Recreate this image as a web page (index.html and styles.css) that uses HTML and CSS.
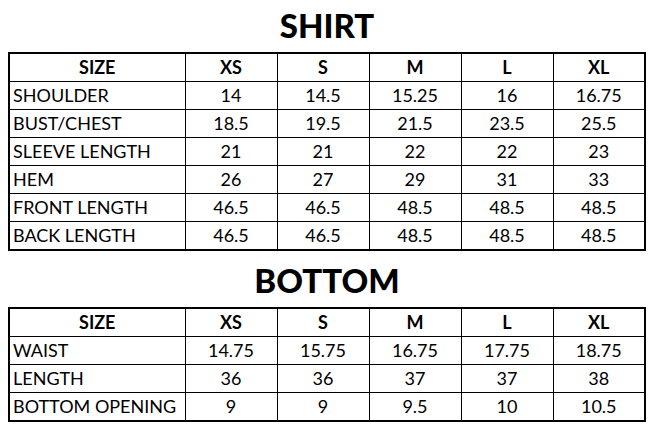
FILE: index.html
```html
<!DOCTYPE html>
<html>
<head>
<meta charset="utf-8">
<link rel="stylesheet" href="styles.css">
</head>
<body>
<div class="page">
  <h1 class="title title-first">SHIRT</h1>
  <table class="chart">
    <colgroup>
      <col class="c-label"><col class="c-size"><col class="c-size"><col class="c-size"><col class="c-size"><col class="c-size">
    </colgroup>
    <tr class="head"><th>SIZE</th><th>XS</th><th>S</th><th>M</th><th>L</th><th>XL</th></tr>
    <tr><td>SHOULDER</td><td>14</td><td>14.5</td><td>15.25</td><td>16</td><td>16.75</td></tr>
    <tr><td>BUST/CHEST</td><td>18.5</td><td>19.5</td><td>21.5</td><td>23.5</td><td>25.5</td></tr>
    <tr><td>SLEEVE LENGTH</td><td>21</td><td>21</td><td>22</td><td>22</td><td>23</td></tr>
    <tr><td>HEM</td><td>26</td><td>27</td><td>29</td><td>31</td><td>33</td></tr>
    <tr><td>FRONT LENGTH</td><td>46.5</td><td>46.5</td><td>48.5</td><td>48.5</td><td>48.5</td></tr>
    <tr><td>BACK LENGTH</td><td>46.5</td><td>46.5</td><td>48.5</td><td>48.5</td><td>48.5</td></tr>
  </table>
  <h1 class="title title-second">BOTTOM</h1>
  <table class="chart">
    <colgroup>
      <col class="c-label"><col class="c-size"><col class="c-size"><col class="c-size"><col class="c-size"><col class="c-size">
    </colgroup>
    <tr class="head"><th>SIZE</th><th>XS</th><th>S</th><th>M</th><th>L</th><th>XL</th></tr>
    <tr><td>WAIST</td><td>14.75</td><td>15.75</td><td>16.75</td><td>17.75</td><td>18.75</td></tr>
    <tr><td>LENGTH</td><td>36</td><td>36</td><td>37</td><td>37</td><td>38</td></tr>
    <tr><td>BOTTOM OPENING</td><td>9</td><td>9</td><td>9.5</td><td>10</td><td>10.5</td></tr>
  </table>
</div>
</body>
</html>
```
FILE: styles.css
```css
html, body {
  margin: 0;
  padding: 0;
  background: #ffffff;
}
.page {
  width: 656px;
  padding: 0 12px 0 8px;
  box-sizing: border-box;
  font-family: Lato, "Liberation Sans", sans-serif;
  color: #000;
}
.title {
  margin: 0;
  text-align: center;
  font-weight: 900;
  font-size: 33px;
  padding-left: 2px;
}
.title-first {
  height: 52px;
  line-height: 50px;
}
.title-second {
  height: 56px;
  line-height: 58px;
}
.chart {
  width: 636px;
  border-collapse: collapse;
  table-layout: fixed;
  border: 2px solid #000;
}
.c-label { width: 176px; }
.c-size { width: 92px; }
.chart th, .chart td {
  border: 1px solid #000;
  height: 27px;
  padding: 0;
  font-size: 18px;
  line-height: 27px;
  text-align: center;
  white-space: nowrap;
}
.chart th {
  font-weight: 700;
}
.chart td:first-child {
  text-align: left;
  padding-left: 3px;
}
```
